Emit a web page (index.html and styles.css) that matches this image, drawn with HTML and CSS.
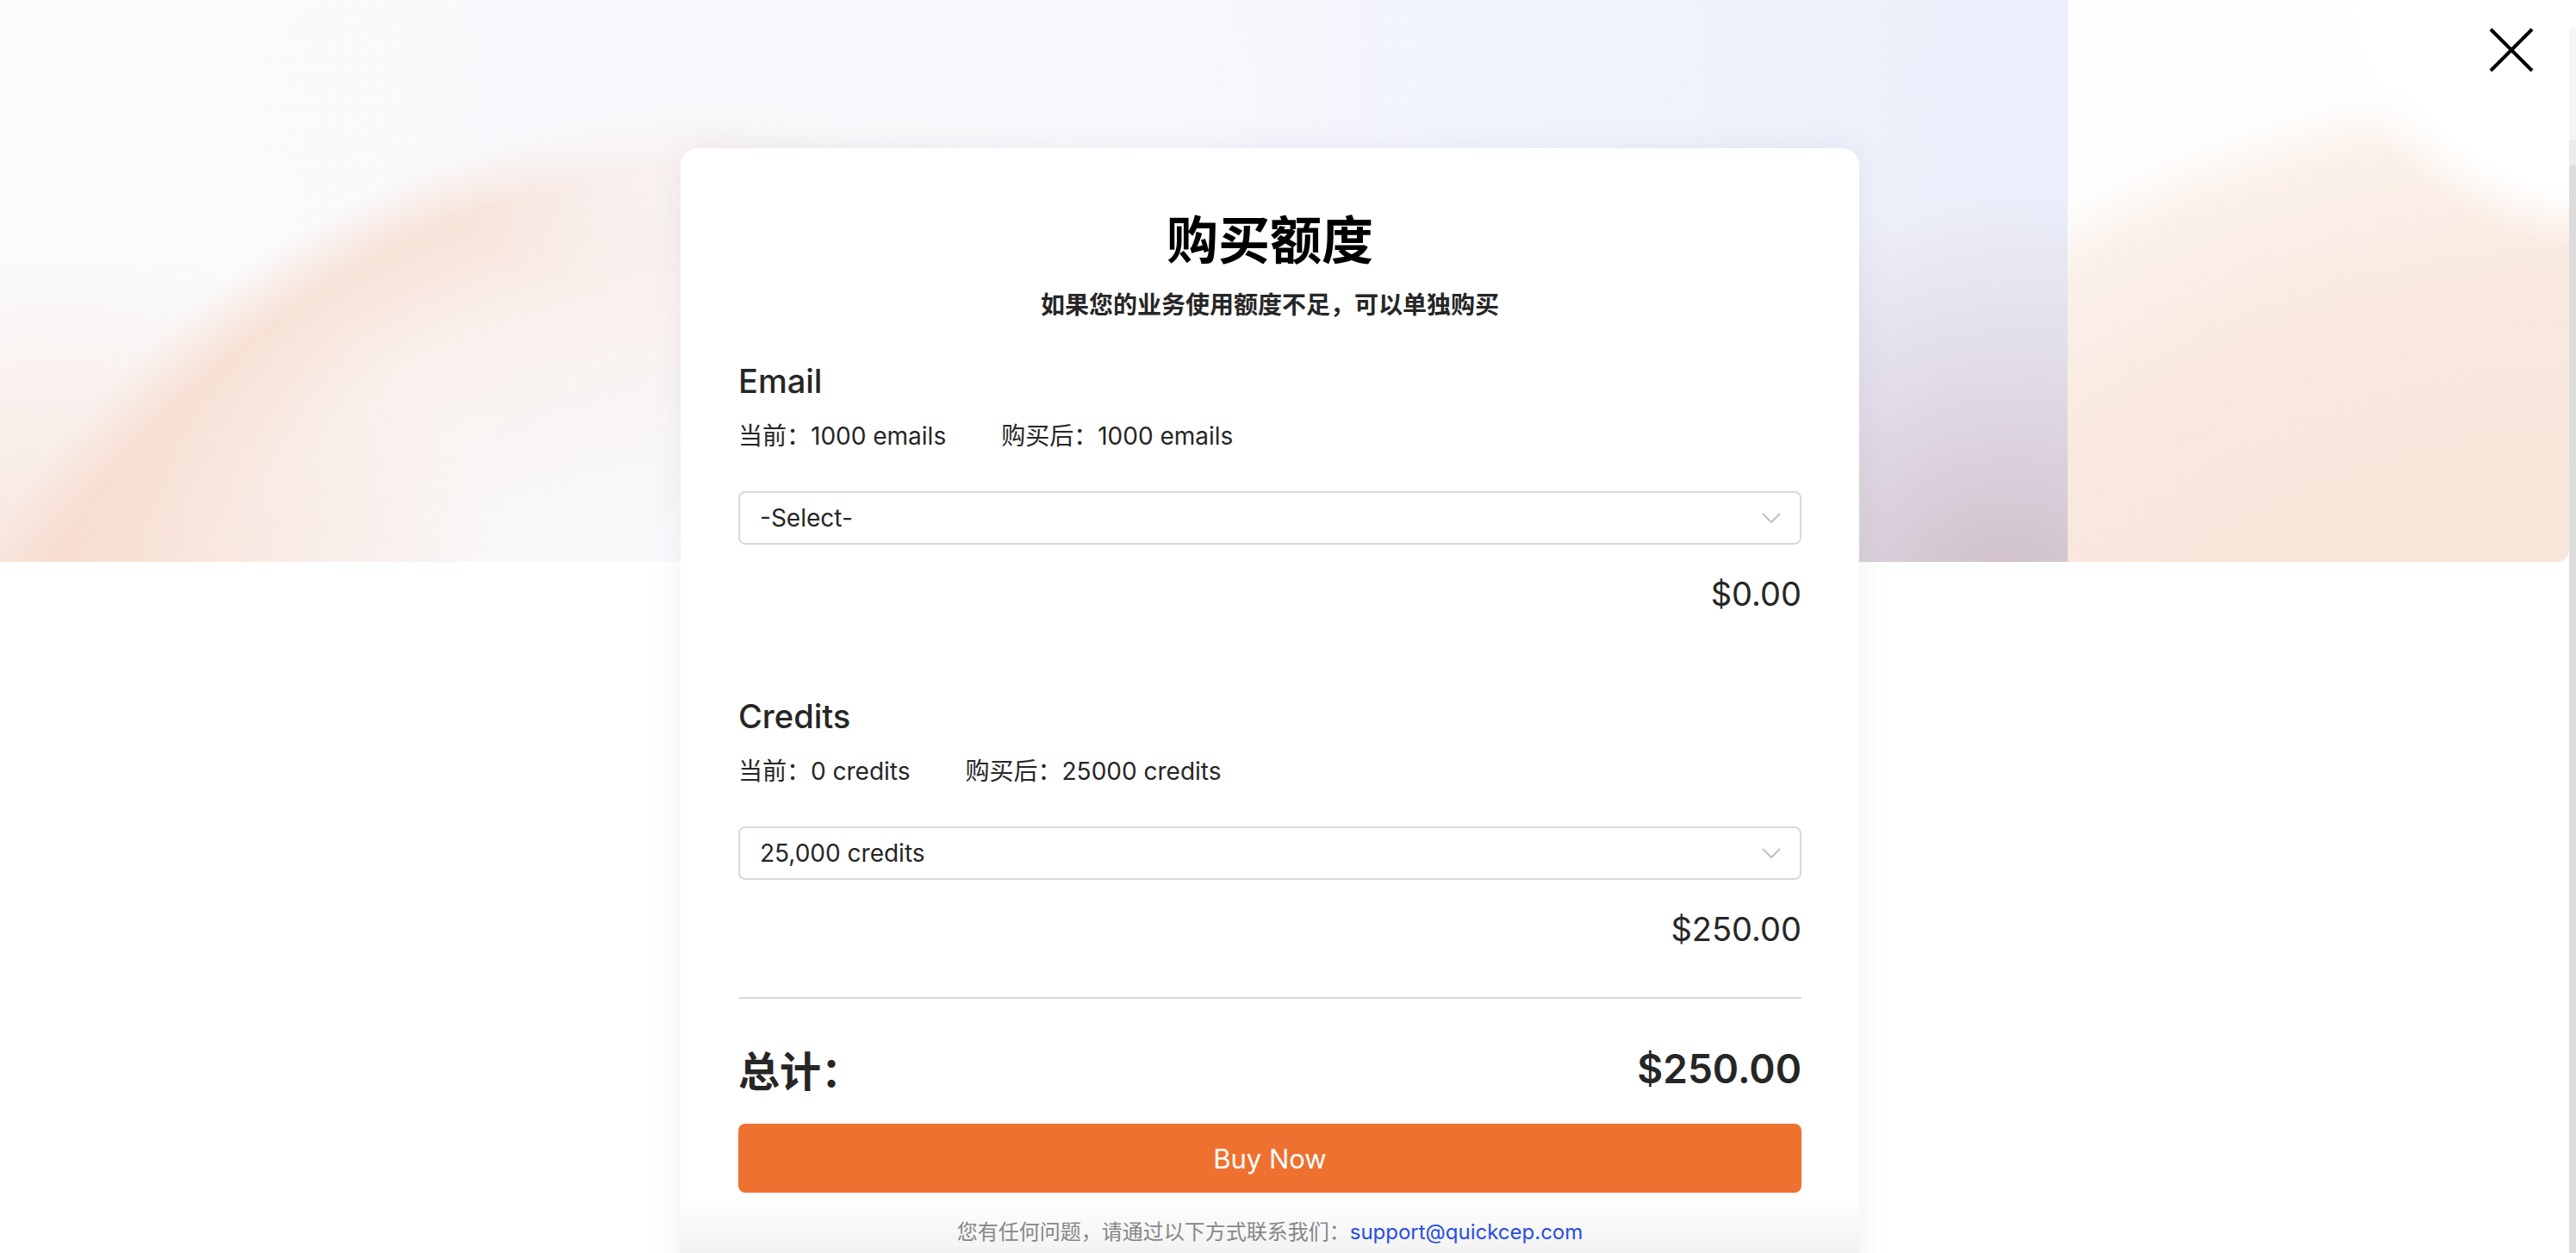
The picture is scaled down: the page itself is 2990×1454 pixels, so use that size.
FILE: index.html
```html
<!DOCTYPE html>
<html lang="zh-CN">

<head>
    <meta charset="UTF-8">
    <meta name="viewport" content="width=device-width, initial-scale=1.0">
    <title>购买额度</title>
    <link rel="stylesheet" href="styles.css">
</head>

<body>
    <div class="hero-bg">
        <div class="hero-left"></div>
        <div class="hero-right"></div>
    </div>
    <div class="scroll-track"></div>

    <button class="close-btn" type="button" aria-label="close">
        <svg width="52" height="52" viewBox="0 0 52 52">
            <path d="M2 2 L50 50 M50 2 L2 50" stroke="#000" stroke-width="4" fill="none" />
        </svg>
    </button>

    <div class="page">
        <div class="buy-card">
            <h2 class="title">购买额度</h2>
            <p class="subtitle">如果您的业务使用额度不足，可以单独购买</p>

            <div class="section">
                <h3 class="section-title">Email</h3>
                <div class="stats">
                    <span>当前：1000 emails</span>
                    <span>购买后：1000 emails</span>
                </div>
                <div class="select">
                    <span class="select-value">-Select-</span>
                    <svg class="chevron" width="22" height="12" viewBox="0 0 22 12">
                        <path d="M1 1 L11 11 L21 1" stroke="#bfbfbf" stroke-width="2" fill="none" />
                    </svg>
                </div>
                <div class="price">$0.00</div>
            </div>

            <div class="section">
                <h3 class="section-title">Credits</h3>
                <div class="stats">
                    <span>当前：0 credits</span>
                    <span>购买后：25000 credits</span>
                </div>
                <div class="select">
                    <span class="select-value">25,000 credits</span>
                    <svg class="chevron" width="22" height="12" viewBox="0 0 22 12">
                        <path d="M1 1 L11 11 L21 1" stroke="#bfbfbf" stroke-width="2" fill="none" />
                    </svg>
                </div>
                <div class="price">$250.00</div>
            </div>

            <div class="divider"></div>

            <div class="total-row">
                <span class="total-label">总计：</span>
                <span class="total-value">$250.00</span>
            </div>

            <button class="buy-btn" type="button">Buy Now</button>

            <p class="footer-note">您有任何问题，请通过以下方式联系我们：<a href="#">support@quickcep.com</a></p>
        </div>
    </div>
    <div class="bottom-fade"></div>
</body>

</html>
```

FILE: styles.css
```css
* {
    margin: 0;
    padding: 0;
    box-sizing: border-box;
}

html,
body {
    height: 100%;
    overflow: hidden;
}

body {
    position: relative;
    background: #fff;
    font-family: 'Inter', 'Noto Sans CJK SC', sans-serif;
    color: #262626;
}

/* blurred decorative header */
.hero-bg {
    position: absolute;
    top: 0;
    left: 0;
    width: 2982px;
    height: 652px;
    display: flex;
    border-bottom-right-radius: 14px;
    overflow: hidden;
}

.hero-left {
    width: 2400px;
    background:
        radial-gradient(ellipse 560px 260px at 1000px 120px, rgba(249, 249, 253, 0.95), rgba(249, 249, 253, 0.6) 60%, rgba(249, 249, 253, 0) 100%),
        radial-gradient(ellipse 520px 420px at 60px 700px, rgba(246, 218, 203, 0.7), rgba(246, 218, 203, 0) 100%),
        radial-gradient(circle 1060px at 900px 1170px, rgba(252, 244, 240, 0) 50%, rgba(250, 236, 229, 0.6) 80%, rgba(247, 222, 209, 0.85) 93%, rgba(247, 222, 209, 0) 100%),
        radial-gradient(ellipse 520px 480px at 2330px 700px, rgba(204, 186, 197, 0.95), rgba(214, 200, 210, 0.5) 55%, rgba(214, 200, 210, 0) 100%),
        radial-gradient(ellipse 700px 420px at 1450px 560px, rgba(240, 238, 251, 0.8), rgba(240, 238, 251, 0) 100%),
        linear-gradient(to right, #fbfbfd 0%, #f8f9fd 50%, #ebeefb 100%);
}

.hero-right {
    flex: 1;
    background:
        radial-gradient(circle 330px at 620px -40px, #ffffff 80%, rgba(255, 255, 255, 0) 100%),
        radial-gradient(circle 1250px at 600px 1330px, #f7e0d2 0%, #f9e8de 78%, #fbf1ea 94%, rgba(254, 253, 252, 0) 100%),
        #fefefe;
}

.scroll-track {
    position: absolute;
    top: 32px;
    right: 0;
    width: 8px;
    height: 1422px;
    background: linear-gradient(to bottom, #f5f5f6 0, #f5f5f6 131px, #ebebeb 131px, #ebebeb 160px, #dcdcdc 160px);
}

.close-btn {
    position: absolute;
    top: 32px;
    left: 2889px;
    width: 52px;
    height: 52px;
    border: none;
    background: none;
    cursor: pointer;
    z-index: 2;
}

.close-btn svg {
    display: block;
}

.page {
    position: relative;
    z-index: 1;
    padding: 172px 0 0 790px;
}

.buy-card {
    width: 1368px;
    background: #fff;
    border-radius: 20px;
    box-shadow: 0 0 40px rgba(40, 40, 70, 0.06);
    padding: 67px 67px 80px;
}

.title {
    font-size: 60px;
    line-height: 80px;
    font-weight: 700;
    color: #000;
    text-align: center;
}

.subtitle {
    margin-top: 15px;
    font-size: 28px;
    line-height: 40px;
    font-weight: 600;
    color: #262626;
    text-align: center;
}

.section {
    margin-top: 43px;
}

.section + .section {
    margin-top: 92px;
}

.section-title {
    font-size: 38px;
    line-height: 50px;
    font-weight: 500;
    color: #262626;
}

.stats {
    margin-top: 19px;
    display: flex;
    gap: 64px;
    font-size: 28px;
    line-height: 40px;
    color: #262626;
}

.select {
    margin-top: 44px;
    height: 62px;
    border: 2px solid #d9d9d9;
    border-radius: 8px;
    display: flex;
    align-items: center;
    justify-content: space-between;
    padding: 0 22px 0 23px;
}

.select-value {
    font-size: 28px;
    color: #262626;
}

.price {
    margin-top: 32px;
    font-size: 38px;
    line-height: 50px;
    text-align: right;
    color: #262626;
}

.divider {
    margin-top: 54px;
    height: 2px;
    background: #d9d9d9;
}

.total-row {
    margin-top: 49px;
    display: flex;
    justify-content: space-between;
    align-items: center;
    height: 64px;
    color: #262626;
}

.total-label {
    font-size: 48px;
    font-weight: 700;
}

.total-value {
    font-size: 46px;
    font-weight: 600;
}

.buy-btn {
    display: block;
    width: 100%;
    margin-top: 32px;
    height: 80px;
    border: none;
    border-radius: 8px;
    background: #ee7130;
    color: #fff;
    font-family: inherit;
    font-size: 31px;
    cursor: pointer;
}

.footer-note {
    margin-top: 28px;
    font-size: 24px;
    line-height: 36px;
    color: #8c8c8c;
    text-align: center;
}

.footer-note a {
    color: #2a50ec;
    text-decoration: none;
}

/* soft shade at the bottom of the modal viewport */
.bottom-fade {
    position: fixed;
    left: 790px;
    bottom: 0;
    width: 1368px;
    height: 64px;
    z-index: 2;
    pointer-events: none;
    background: linear-gradient(to bottom, rgba(0, 0, 0, 0), rgba(0, 0, 0, 0.05));
}
```
